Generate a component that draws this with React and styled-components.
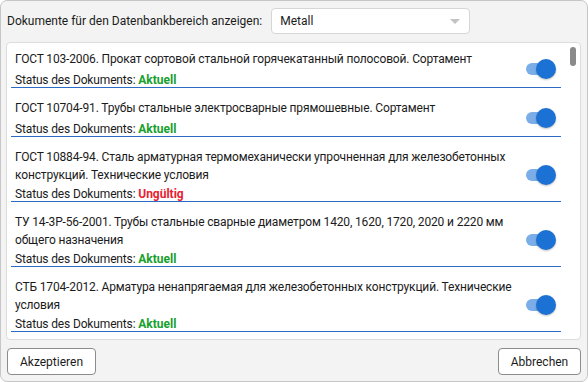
import React from "react";
import styled, { createGlobalStyle } from "styled-components";

const GlobalStyle = createGlobalStyle`
  html, body {
    margin: 0;
    padding: 0;
    background: #ffffff;
  }
  body {
    font-family: Roboto, "Noto Sans", sans-serif;
    font-size: 12px;
    color: #1b1b1b;
  }
`;

const Window = styled.div`
  width: 588px;
  height: 382px;
  box-sizing: border-box;
  border: 1px solid #c6c6c6;
  border-radius: 7px;
  background: #f3f3f3;
  display: flex;
  flex-direction: column;
  padding: 7px 6px 6px 5px;
  gap: 8px;
`;

const Header = styled.div`
  display: flex;
  align-items: center;
  gap: 9px;
  height: 26px;
  padding-left: 1px;
`;

const Label = styled.span`
  white-space: nowrap;
`;

const Combo = styled.div`
  width: 199px;
  height: 26px;
  box-sizing: border-box;
  background: #ffffff;
  border: 1px solid #d6d6d6;
  border-radius: 4px;
  display: flex;
  align-items: center;
  justify-content: space-between;
  padding: 0 9px 0 8px;

  .caret {
    width: 0;
    height: 0;
    border-left: 5px solid transparent;
    border-right: 5px solid transparent;
    border-top: 5px solid #c2c2c2;
  }
`;

const Panel = styled.div`
  flex: 1;
  min-height: 0;
  background: #ffffff;
  border: 1px solid #dcdcdc;
  border-radius: 4px;
  display: flex;
  overflow: hidden;
`;

const List = styled.div`
  flex: 1;
  padding: 0 4px 0 4px;
`;

const ScrollTrack = styled.div`
  width: 15px;
  padding-top: 4px;
  display: flex;
  justify-content: center;

  .thumb {
    width: 6px;
    height: 19px;
    border-radius: 3px;
    background: #8a8a8a;
  }
`;

const Item = styled.div`
  display: flex;
  align-items: center;
  padding: 11px 5px 0 4px;
  border-bottom: 1px solid #2b6cc4;

  &:first-child {
    padding-top: 7px;
  }
`;

const ItemText = styled.div`
  flex: 1;
  padding-right: 6px;
  letter-spacing: -0.15px;
`;

const Title = styled.div`
  line-height: 18px;
  min-height: 20px;
`;

const StatusLine = styled.div`
  line-height: 14px;
  margin-top: 3px;
`;

const Status = styled.span`
  font-weight: 700;
  letter-spacing: 0;
  color: ${({ $valid }) => ($valid ? "#17a02c" : "#e8212f")};
`;

const Toggle = styled.div`
  position: relative;
  width: 30px;
  height: 20px;
  flex-shrink: 0;

  &::before {
    content: "";
    position: absolute;
    left: 0;
    top: 4px;
    width: 24px;
    height: 12px;
    border-radius: 6px;
    background: #7baee8;
  }

  &::after {
    content: "";
    position: absolute;
    right: 0;
    top: 0;
    width: 20px;
    height: 20px;
    border-radius: 50%;
    background: #1c72d4;
    box-shadow: 0 1px 2px rgba(0, 0, 0, 0.25);
  }
`;

const Footer = styled.div`
  display: flex;
  justify-content: space-between;
  padding-left: 1px;
`;

const Button = styled.button`
  width: ${({ $width }) => $width}px;
  height: 27px;
  box-sizing: border-box;
  background: #ffffff;
  border: 1px solid #8c8c8c;
  border-radius: 4px;
  font-family: inherit;
  font-size: 12px;
  color: #1b1b1b;
  padding: 0;
`;

const documents = [
  {
    title: "ГОСТ 103-2006. Прокат сортовой стальной горячекатанный полосовой. Сортамент",
    valid: true,
  },
  {
    title: "ГОСТ 10704-91. Трубы стальные электросварные прямошевные. Сортамент",
    valid: true,
  },
  {
    title:
      "ГОСТ 10884-94. Сталь арматурная термомеханически упрочненная для железобетонных конструкций. Технические условия",
    valid: false,
  },
  {
    title:
      "ТУ 14-3Р-56-2001. Трубы стальные сварные диаметром 1420, 1620, 1720, 2020 и 2220 мм общего назначения",
    valid: true,
  },
  {
    title:
      "СТБ 1704-2012. Арматура ненапрягаемая для железобетонных конструкций. Технические условия",
    valid: true,
  },
];

export default function App() {
  return (
    <>
      <GlobalStyle />
      <Window>
        <Header>
          <Label>Dokumente für den Datenbankbereich anzeigen:</Label>
          <Combo>
            <span>Metall</span>
            <span className="caret" />
          </Combo>
        </Header>
        <Panel>
          <List>
            {documents.map((doc) => (
              <Item key={doc.title}>
                <ItemText>
                  <Title>{doc.title}</Title>
                  <StatusLine>
                    Status des Dokuments:{" "}
                    <Status $valid={doc.valid}>{doc.valid ? "Aktuell" : "Ungültig"}</Status>
                  </StatusLine>
                </ItemText>
                <Toggle />
              </Item>
            ))}
          </List>
          <ScrollTrack>
            <div className="thumb" />
          </ScrollTrack>
        </Panel>
        <Footer>
          <Button $width={89}>Akzeptieren</Button>
          <Button $width={83}>Abbrechen</Button>
        </Footer>
      </Window>
    </>
  );
}
